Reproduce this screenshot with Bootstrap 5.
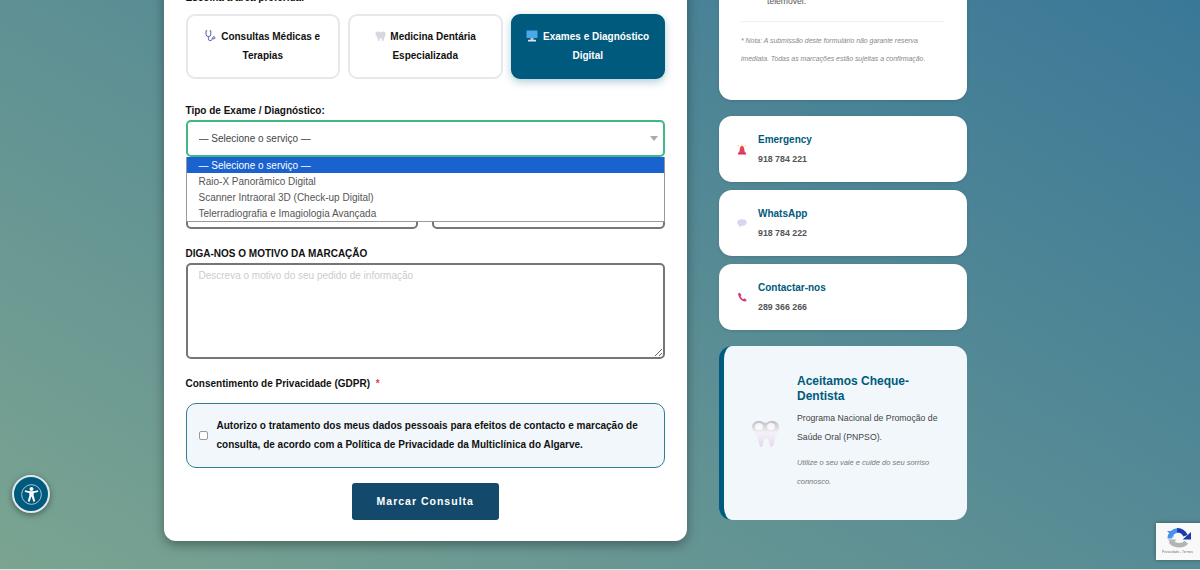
<!DOCTYPE html>
<html lang="pt">
<head>
<meta charset="utf-8">
<title>Marcar Consulta</title>
<link href="https://cdn.jsdelivr.net/npm/bootstrap@5.3.0/dist/css/bootstrap.min.css" rel="stylesheet">
<style>
html,body{height:100%;overflow:hidden}
body{font-family:"Liberation Sans",Arial,sans-serif;font-size:10px;line-height:19px;color:#111;
 background:linear-gradient(31deg,#7ba491,#3a7898)}
.sheet{margin-top:-40px;padding-left:164px;gap:32px;align-items:flex-start}
.form-panel{width:523px;flex:none;background:#fff;border-radius:12px;padding:28px 22px 21px 21.5px;box-shadow:0 4px 12px rgba(0,0,0,.35)}
.side-col{width:248px;flex:none;gap:8px}
.lbl{font-weight:700;font-size:10px;line-height:19px;margin:0;display:block;color:#111}
.area-row{gap:8px;margin-top:7px}
.area-btn{flex:1 1 0;min-width:0;height:65px;background:#fff;border:2px solid #e6e8eb;border-radius:9px;font-weight:700;font-size:10px;line-height:19px;color:#111;text-align:center;display:flex;align-items:center;justify-content:center;padding:0 12px 2px}
.area-btn.on{background:#005a7d;border-color:#005a7d;color:#fff;box-shadow:0 3px 8px rgba(0,90,125,.3)}
.area-btn svg{vertical-align:-2px;margin-right:2px}
.type-lbl{margin-top:22px}
.sel-wrap{position:relative}
.sel{height:37px;border:2px solid #41b883;border-radius:5px;font-size:10px;color:#444;padding:0 24px 0 11px;line-height:1;background-color:#fff;
 background-image:url("data:image/svg+xml,%3Csvg xmlns='http://www.w3.org/2000/svg' viewBox='0 0 8 5'%3E%3Cpath fill='%23aaa' d='M0 0h8L4 5z'/%3E%3C/svg%3E");background-size:8px 5px;background-position:right 5px center}
.sel:focus{border-color:#41b883;box-shadow:none}
.opts{position:absolute;left:0;right:0;top:37px;background:#fff;border:1px solid #999;border-top:0;margin:0;padding:0;list-style:none;font-size:10px;line-height:15.1px;color:#555;z-index:5}
.opts li{padding:1px 12px 0}
.opts li.cur{background:#1a62d0;color:#fff}
.two-inputs{gap:14px;margin-top:36px}
.inp{flex:1 1 0;height:36px;border:2px solid #767676;border-radius:5px;font-size:10px;padding:0 11px}
.motivo-lbl{margin-top:15px}
.motivo{display:block;height:96px;border:2px solid #767676;border-radius:5px;font-size:10px;line-height:19px;padding:1px 11px;color:#444;resize:vertical}
.motivo::placeholder{color:#ccc;opacity:1}
.motivo:focus{border-color:#767676;box-shadow:none}
.gdpr-lbl{margin-top:15px;margin-bottom:10px}
.req{color:#e04545;margin-left:3px}
.gdpr-box{height:65px;background:#f1f7fb;border:1px solid #2f7d99;border-radius:10px;padding:0 12px 2px;gap:9px;font-weight:700;font-size:10px;line-height:19px;color:#111}
.gdpr-box .form-check-input{width:9px;height:9px;flex:none;margin:2px 0 0;border:1px solid #999;border-radius:2px}
.go-btn{display:block;margin:15px auto 0;width:147px;height:37px;background:#134a6b;border:0;border-radius:3px;color:#fff;font-weight:700;font-size:10.5px;letter-spacing:1px;padding:0}
.go-btn:hover{background:#134a6b;color:#fff}
.side-card{background:#fff;border-radius:13px;box-shadow:0 1px 3px rgba(0,0,0,.12)}
.info-card{height:140px;padding:32px 22px 0 22px;margin-bottom:8px}
.tele{padding-left:26px;font-size:8.6px;color:#555;line-height:19px}
.rule{margin:0;border:0;border-top:1px solid #f0f0f0;opacity:1;margin-top:10px}
.note{font-size:6.9px;font-style:italic;color:#888;line-height:18px;margin:10px 0 0}
.call-card{height:66px;padding:0 18px;gap:11px}
.call-card .emo{width:10px;flex:none;display:flex;justify-content:center}
.call-t{font-weight:700;font-size:10px;line-height:19px;color:#005a7d}
.call-n{font-weight:700;font-size:8.8px;line-height:19px;color:#555;margin:1px 0 -1px}
.cheque{margin-top:8px;height:174px;background:#f1f7fb;border-left:5px solid #005a7d;padding:0 22px 2px 27px;gap:17px;align-items:center;box-shadow:none}
.cheque-ico{flex:none;margin-top:3px}
.cheque-txt{width:148px}
.cheque-t{font-weight:700;font-size:12px;line-height:15px;color:#005a7d;margin:0 0 5px}
.cheque-p{font-size:8.7px;line-height:19px;color:#444;margin:0}
.cheque-i{font-size:7.5px;font-style:italic;line-height:19px;color:#777;margin:6px 0 0}
.a11y{position:fixed;left:12px;top:475px;width:38px;height:38px;border-radius:50%;background:#005a7d;border:2px solid #dfe9ee;display:flex;align-items:center;justify-content:center;padding:0;box-shadow:0 2px 6px rgba(0,0,0,.4)}
.captcha{position:fixed;left:1156px;top:523px;width:60px;height:37px;background:#f9f9f9;box-shadow:0 0 4px rgba(0,0,0,.35);padding:4px 0 0 6px}
.captcha svg{display:block;margin-left:5px}
.captcha-t{font-size:3.3px;line-height:5px;color:#777;white-space:nowrap}
.foot-line{position:fixed;left:0;right:0;bottom:0;height:1px;background:#dfe8ea}
</style>
</head>
<body>
<div class="sheet d-flex">
  <form class="form-panel">
    <span class="lbl">Escolha a área preferida:</span>
    <div class="area-row d-flex">
      <div class="area-btn"><span><svg width="11" height="12" viewBox="0 0 11 12" fill="none" stroke="#5c5cb0" stroke-width="1"><path d="M2.2 .8H1v3.4a2.4 2.4 0 0 0 4.800 0V.8H4.600"/><path d="M3.400 6.600v2a1.900 1.900 0 0 0 3.800.3V8"/><circle cx="8.800" cy="7.800" r="1.100"/></svg> Consultas Médicas e Terapias</span></div>
      <div class="area-btn"><span><svg width="11" height="11" viewBox="0 0 29 28"><path fill="#d9d6de" d="M1 7C1 2 6 .5 9 1c3 .5 4 2 5.500 2 1.500 0 2.500-1.500 5.500-2 3-.5 8 1 8 6 0 5-3 8-4 12-.7 3-2 8-3.500 8-2 0-1.500-8-5.500-9-3 0-2.500 9-5 9-1.500 0-2.500-5-3.500-9C6 14 1 12 1 7z"/></svg> Medicina Dentária Especializada</span></div>
      <div class="area-btn on"><span><svg width="12" height="12" viewBox="0 0 12 12"><rect x=".5" y=".5" width="11" height="7.500" rx=".6" fill="#4aa8e8"/><rect x="4.500" y="8" width="3" height="2" fill="#b8c4cc"/><rect x="2" y="9.800" width="8" height="1.700" fill="#dfe6ea"/></svg> Exames e Diagnóstico Digital</span></div>
    </div>

    <label class="lbl type-lbl" for="srv">Tipo de Exame / Diagnóstico:</label>
    <div class="sel-wrap">
      <select id="srv" class="form-select sel"><option>— Selecione o serviço —</option></select>
      <ul class="opts">
        <li class="cur">— Selecione o serviço —</li>
        <li>Raio-X Panorâmico Digital</li>
        <li>Scanner Intraoral 3D (Check-up Digital)</li>
        <li>Telerradiografia e Imagiologia Avançada</li>
      </ul>
    </div>
    <div class="two-inputs d-flex">
      <input class="form-control inp" type="text" aria-label="Data">
      <input class="form-control inp" type="text" aria-label="Hora">
    </div>

    <label class="lbl motivo-lbl" for="mot">DIGA-NOS O MOTIVO DA MARCAÇÃO</label>
    <textarea id="mot" class="form-control motivo" placeholder="Descreva o motivo do seu pedido de informação"></textarea>

    <div class="lbl gdpr-lbl">Consentimento de Privacidade (GDPR) <span class="req">*</span></div>
    <label class="gdpr-box d-flex align-items-center">
      <input class="form-check-input" type="checkbox">
      <span>Autorizo o tratamento dos meus dados pessoais para efeitos de contacto e marcação de consulta, de acordo com a Política de Privacidade da Multiclínica do Algarve.</span>
    </label>
    <button type="button" class="btn go-btn">Marcar Consulta</button>
  </form>

  <aside class="side-col d-flex flex-column">
    <div class="side-card info-card">
      <div class="tele">telemóvel.</div>
      <hr class="rule">
      <p class="note">* Nota: A submissão deste formulário não garante reserva imediata. Todas as marcações estão sujeitas a confirmação.</p>
    </div>
    <div class="side-card call-card d-flex align-items-center">
      <span class="emo"><svg width="10" height="11" viewBox="0 0 10 11"><path d="M2 2.500 1 1M5 2V.3M8 2.500 9 1" stroke="#f0c850" stroke-width=".8"/><path fill="#e8405a" d="M3 4a2 2 0 0 1 4 0l1 5H2z"/><rect x="1" y="8.600" width="8" height="1.900" fill="#d8305a"/></svg></span>
      <div><div class="call-t">Emergency</div><div class="call-n">918 784 221</div></div>
    </div>
    <div class="side-card call-card d-flex align-items-center">
      <span class="emo"><svg width="10" height="9" viewBox="0 0 10 9"><ellipse cx="5" cy="3.600" rx="4.700" ry="3.300" fill="#dcd3f0"/><path fill="#dcd3f0" d="M2.500 5.500 2 8.500 5 6.500z"/></svg></span>
      <div><div class="call-t">WhatsApp</div><div class="call-n">918 784 222</div></div>
    </div>
    <div class="side-card call-card d-flex align-items-center">
      <span class="emo"><svg width="12" height="12" viewBox="0 0 24 24"><path fill="#d8387f" d="M6.600 1.500 3 3C1.500 9 8 22 20.500 23l3-4-6-4-2.500 2.500C12 16 9 12 8.500 9.500L11 7.500z"/></svg></span>
      <div><div class="call-t">Contactar-nos</div><div class="call-n">289 366 266</div></div>
    </div>
    <div class="side-card cheque d-flex">
      <svg width="29" height="28" viewBox="0 0 29 28" class="cheque-ico">
        <defs><linearGradient id="th" x1="0" y1="0" x2="0" y2="1"><stop offset="0" stop-color="#bdbdc4"/><stop offset=".45" stop-color="#f4f2f7"/><stop offset="1" stop-color="#e6d6f2"/></linearGradient></defs>
        <path fill="url(#th)" d="M1 7C1 2 6 .5 9 1c3 .5 4 2 5.500 2 1.500 0 2.500-1.500 5.500-2 3-.5 8 1 8 6 0 5-3 8-4 12-.7 3-2 8-3.500 8-2 0-1.500-8-5.500-9-3 0-2.500 9-5 9-1.500 0-2.500-5-3.500-9C6 14 1 12 1 7z"/>
        <ellipse cx="8" cy="6.500" rx="4" ry="3.500" fill="#fff" opacity=".8"/><ellipse cx="20" cy="6.500" rx="4" ry="3.500" fill="#fff" opacity=".8"/>
      </svg>
      <div class="cheque-txt">
        <h3 class="cheque-t">Aceitamos Cheque-Dentista</h3>
        <p class="cheque-p">Programa Nacional de Promoção de Saúde Oral (PNPSO).</p>
        <p class="cheque-i">Utilize o seu vale e cuide do seu sorriso connosco.</p>
      </div>
    </div>
  </aside>
</div>

<button type="button" class="a11y" aria-label="Acessibilidade">
  <svg width="21" height="21" viewBox="0 0 26 26" fill="#fff"><circle cx="13" cy="13" r="12.200" fill="none" stroke="#cfe0e8" stroke-width="1"/><circle cx="13" cy="6.300" r="2.500"/><path d="M4.500 9.500l.6-1.800c2.600.9 5.300 1.300 7.900 1.300s5.300-.4 7.900-1.300l.6 1.800c-2 .8-3.900 1.300-5.800 1.600v3.400l2 7-2.400.5-2-6.300h-.6l-2 6.300-2.400-.5 2-7v-3.400c-1.900-.3-3.800-.8-5.800-1.600z"/></svg>
</button>
<div class="captcha">
  <svg width="24" height="23" viewBox="0 0 26 24" fill="none" stroke-width="5">
    <path d="M3 12A10 9 0 0 1 12 3" stroke="#4a8ff0"/><path fill="#4a8ff0" d="M0 4h7v7z" stroke="none"/>
    <path d="M11 3A10 9 0 0 1 20 9" stroke="#1c3aa9"/><path fill="#1c3aa9" d="M26 5v8h-9z" stroke="none"/>
    <path d="M21 16A10 8 0 0 1 4 15" stroke="#b4b4b4"/><path fill="#b4b4b4" d="M1 13h9l-4 6z" stroke="none"/>
  </svg>
  <div class="captcha-t">Privacidade - Termos</div>
</div>
<div class="foot-line"></div>
<script src="https://cdn.jsdelivr.net/npm/bootstrap@5.3.0/dist/js/bootstrap.bundle.min.js"></script>
</body>
</html>
